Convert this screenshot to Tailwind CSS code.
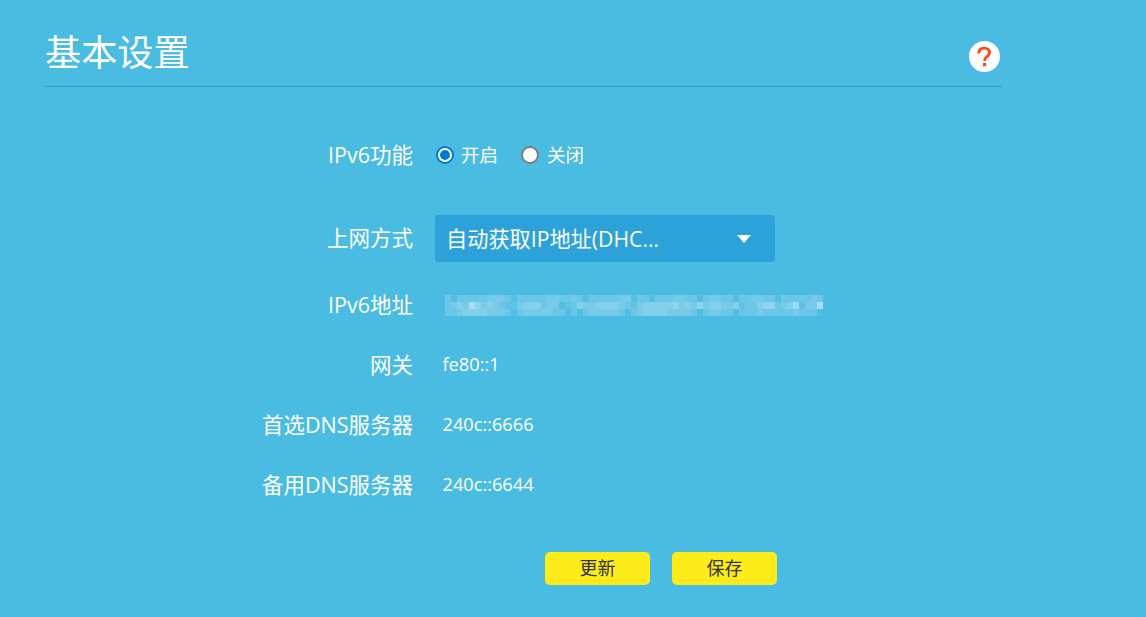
<!DOCTYPE html>
<html>
<head>
<meta charset="utf-8" />
<title>基本设置</title>
<script src="https://cdn.jsdelivr.net/npm/@tailwindcss/browser@4"></script>
</head>
<body class="bg-[#4abbe1] overflow-hidden">
<div class="w-[1146px] h-[617px] font-['Open_Sans','Noto_Sans_CJK_SC',sans-serif] text-white">
  <div class="ml-[45px] w-[957px] h-[87px] border-b border-[#2a9fdb] flex justify-between">
    <h1 class="mt-[26px] text-[36.2px] leading-[52px] font-normal">基本设置</h1>
    <div class="mt-[41px] mr-[2px] w-[31px] h-[31px] rounded-full bg-white flex items-center justify-center">
      <svg width="31" height="31" viewBox="0 0 31 31" fill="none">
        <path d="M9.8 12.5 C9.8 8.8 12.3 7.2 15.3 7.2 C18.4 7.2 20.6 9 20.6 11.6 C20.6 13.8 19.2 14.8 17.6 15.9 C16.2 16.9 15.6 17.6 15.6 20" stroke="#ff4a12" stroke-width="2.8"></path>
        <rect x="14" y="22" width="3.2" height="3.2" fill="#ff4a12"></rect>
      </svg>
    </div>
  </div>

  <div class="mt-[50px] h-[36px] flex items-center text-[21.5px]">
    <label class="w-[413px] text-right">IPv6功能</label>
    <div class="ml-[23px] flex items-center text-[18.5px] -mt-[1px]">
      <span class="w-[18px] h-[18px] rounded-full bg-[#0078d4] flex items-center justify-center"><span class="w-[14px] h-[14px] rounded-full border-[2px] border-white bg-[#0078d4]"></span></span>
      <span class="ml-[7px]">开启</span>
      <span class="ml-[23px] w-[18px] h-[18px] rounded-full bg-white border-[2px] border-[#7d7d7d]"></span>
      <span class="ml-[8px]">关闭</span>
    </div>
  </div>

  <div class="mt-[42px] h-[47px] flex items-center text-[21.5px]">
    <label class="w-[413px] text-right">上网方式</label>
    <div class="ml-[22px] w-[340px] h-[47px] rounded-[4px] bg-[#2ca2d9] flex items-center justify-between pl-[11px] pr-[24px]">
      <span class="text-[21.2px]">自动获取IP地址(DHC...</span>
      <span class="w-0 h-0 border-x-[7px] border-x-transparent border-t-[8px] border-t-white"></span>
    </div>
  </div>

  <div class="mt-[20px] h-[46px] flex items-center text-[21.5px]">
    <label class="w-[413px] text-right">IPv6地址</label>
    <div id="mosaic" class="ml-[32px] grid grid-cols-[repeat(63,6px)] grid-rows-[repeat(3,7px)] bg-white/5"></div>
  </div>

  <div class="mt-[14px] h-[46px] flex items-center text-[21.5px]">
    <label class="w-[413px] text-right">网关</label>
    <span class="ml-[29.5px] -mt-[1px] text-[18.2px]">fe80::1</span>
  </div>
  <div class="mt-[14px] h-[46px] flex items-center text-[21.5px]">
    <label class="w-[413px] text-right">首选DNS服务器</label>
    <span class="ml-[29.5px] -mt-[1px] text-[18.2px]">240c::6666</span>
  </div>
  <div class="mt-[14px] h-[46px] flex items-center text-[21.5px]">
    <label class="w-[413px] text-right">备用DNS服务器</label>
    <span class="ml-[29.5px] -mt-[1px] text-[18.2px]">240c::6644</span>
  </div>

  <div class="mt-[44px] ml-[545px] flex gap-[22px]">
    <button class="w-[105px] h-[33px] rounded-[5px] bg-[#fdeb1a] text-[#333] text-[18px]">更新</button>
    <button class="w-[105px] h-[33px] rounded-[5px] bg-[#fdeb1a] text-[#333] text-[18px]">保存</button>
  </div>
</div>
<script>
  // blurred address: strength of each mosaic cell, top / middle / bottom row
  const top_ = "202222233320222223322320222223302202223322023322022332202222232";
  const mid_ = "234375343211344423301243344443213444445343534433412245523461337";
  const bot_ = "223444433320233333220202333332023444433332023322022232222232220";
  const mosaic = document.getElementById('mosaic');
  [top_, mid_, bot_].forEach(row => {
    for (const c of row) {
      const cell = document.createElement('span');
      cell.style.background = 'rgba(255,255,255,' + (Number(c) * 0.07) + ')';
      mosaic.appendChild(cell);
    }
  });
</script>
</body>
</html>
